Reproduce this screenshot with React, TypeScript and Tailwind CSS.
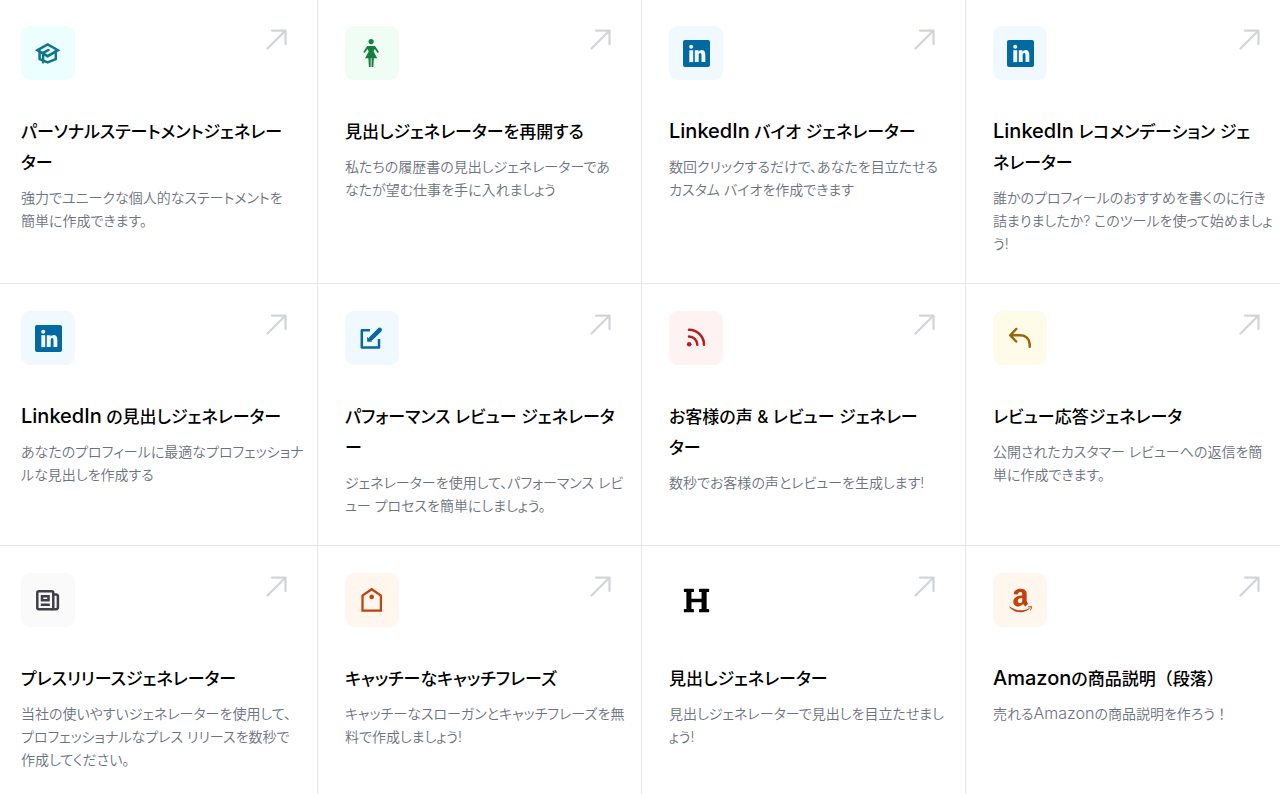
import type { ReactNode } from "react";
import { FaAmazon, FaHeading } from "react-icons/fa";
import { ImWoman } from "react-icons/im";

type Tool = {
  title: string;
  description: string;
  tone: string;
  icon: ReactNode;
};

function StrokeIcon({ children }: { children: ReactNode }) {
  return (
    <svg
      className="size-7"
      viewBox="0 0 28 28"
      fill="none"
      stroke="currentColor"
      strokeWidth="2.5"
      strokeLinecap="round"
      strokeLinejoin="round"
      aria-hidden="true"
    >
      {children}
    </svg>
  );
}

function LinkedInIcon() {
  return (
    <svg className="size-[27px]" viewBox="0 0 27 27" aria-hidden="true">
      <rect width="27" height="27" rx="2" fill="currentColor" />
      <g className="fill-sky-50">
        <circle cx="8.200" cy="6.800" r="2" />
        <path d="M6.300 10.200h3.900v11.900H6.300z" />
        <path d="M11.800 10.200h3.700v1.500c.7-1.100 1.800-1.800 3.100-1.800 2.600 0 3.700 1.700 3.700 4.600v7.600h-3.800v-6.900c0-1.400-.4-2.100-1.300-2.100-1 0-1.500.8-1.500 2.200v6.800h-3.900z" />
      </g>
    </svg>
  );
}

const tools: Tool[] = [
  {
    title: "パーソナルステートメントジェネレー\nター",
    description: "強力でユニークな個人的なステートメントを\n簡単に作成できます。",
    tone: "bg-cyan-50 text-[#0e7490]",
    icon: (
      <StrokeIcon>
        <path strokeLinejoin="miter" d="M3.500 11.200 13.700 5.400l10.200 5.800-10.200 6z" />
        <path d="M5.600 12.400v7.800l8.100 3.200 8.100-3.200v-7.800" />
        <path d="m14.500 11-5.400 2.900v9.300" />
      </StrokeIcon>
    ),
  },
  {
    title: "見出しジェネレーターを再開する",
    description: "私たちの履歴書の見出しジェネレーターであ\nなたが望む仕事を手に入れましょう",
    tone: "bg-green-50 text-[#15803d]",
    icon: <ImWoman className="size-7" />,
  },
  {
    title: "LinkedIn バイオ ジェネレーター",
    description: "数回クリックするだけで、あなたを目立たせる\nカスタム バイオを作成できます",
    tone: "bg-sky-50 text-[#0369a1]",
    icon: <LinkedInIcon />,
  },
  {
    title: "LinkedIn レコメンデーション ジェ\nネレーター",
    description: "誰かのプロフィールのおすすめを書くのに行き\n詰まりましたか? このツールを使って始めましょ\nう!",
    tone: "bg-sky-50 text-[#0369a1]",
    icon: <LinkedInIcon />,
  },
  {
    title: "LinkedIn の見出しジェネレーター",
    description: "あなたのプロフィールに最適なプロフェッショナ\nルな見出しを作成する",
    tone: "bg-sky-50 text-[#0369a1]",
    icon: <LinkedInIcon />,
  },
  {
    title: "パフォーマンス レビュー ジェネレータ\nー",
    description: "ジェネレーターを使用して、パフォーマンス レビ\nュー プロセスを簡単にしましょう。",
    tone: "bg-sky-50 text-[#0369a1]",
    icon: (
      <StrokeIcon>
        <path strokeLinecap="butt" d="M12 6.200H3.800v17.200h17.200v-8.500" />
        <path strokeWidth="4.500" d="m13 14.500 8.700-8.700" />
        <path fill="currentColor" stroke="none" d="M9.200 12.800v5h5z" />
      </StrokeIcon>
    ),
  },
  {
    title: "お客様の声 & レビュー ジェネレー\nター",
    description: "数秒でお客様の声とレビューを生成します!",
    tone: "bg-red-50 text-[#b91c1c]",
    icon: (
      <StrokeIcon>
        <path d="M7 5.700a15 15 0 0 1 15 15M7 12.500a8.300 8.300 0 0 1 8.300 8.200" />
        <circle cx="7.200" cy="20.300" r="2.300" fill="currentColor" stroke="none" />
      </StrokeIcon>
    ),
  },
  {
    title: "レビュー応答ジェネレータ",
    description: "公開されたカスタマー レビューへの返信を簡\n単に作成できます。",
    tone: "bg-yellow-50 text-[#a16207]",
    icon: (
      <StrokeIcon>
        <path d="M10.200 5 4.200 11.300l6 6.200M4.200 11.300h10.500a9 9 0 0 1 9 9v2.500" />
      </StrokeIcon>
    ),
  },
  {
    title: "プレスリリースジェネレーター",
    description: "当社の使いやすいジェネレーターを使用して、\nプロフェッショナルなプレス リリースを数秒で\n作成してください。",
    tone: "bg-neutral-50 text-zinc-700",
    icon: (
      <StrokeIcon>
        <rect x="3.300" y="5.200" width="16" height="18" rx="1.500" />
        <path d="M19.300 8.500h2.900a1.700 1.700 0 0 1 1.700 1.700v11.300a1.700 1.700 0 0 1-1.700 1.700h-4" />
        <path strokeLinecap="butt" strokeLinejoin="miter" d="M8 10.200h6.500v4H8zM6.800 18.700h9" />
      </StrokeIcon>
    ),
  },
  {
    title: "キャッチーなキャッチフレーズ",
    description: "キャッチーなスローガンとキャッチフレーズを無\n料で作成しましょう!",
    tone: "bg-orange-50 text-[#c2410c]",
    icon: (
      <StrokeIcon>
        <path strokeWidth="2.250" strokeLinejoin="miter" d="M4.500 24.700V9.500l9.200-6.300 9.200 6.300v15.200z" />
        <circle cx="13.700" cy="10.900" r="2.300" fill="currentColor" stroke="none" />
      </StrokeIcon>
    ),
  },
  {
    title: "見出しジェネレーター",
    description: "見出しジェネレーターで見出しを目立たせまし\nょう!",
    tone: "text-black",
    icon: <FaHeading className="size-[27px]" />,
  },
  {
    title: "Amazonの商品説明（段落）",
    description: "売れるAmazonの商品説明を作ろう！",
    tone: "bg-orange-50 text-[#c2410c]",
    icon: <FaAmazon className="size-[27px]" />,
  },
];

// Latin words run larger than the kana, full-width marks keep their full em.
function MixedLines({ text, latinClass }: { text: string; latinClass: string }) {
  return text.split("\n").map((line) => (
    <span key={line} className="block">
      {line.split(/([A-Za-z]+|[（）！])/).map((part, i) => {
        if (i % 2 === 0) return part;
        return (
          <span key={i} className={/[A-Za-z]/.test(part) ? latinClass : "[font-feature-settings:normal]"}>
            {part}
          </span>
        );
      })}
    </span>
  ));
}

function ToolCard({ tool }: { tool: Tool }) {
  return (
    <a
      href="#"
      className="block min-w-0 border-r border-b border-[#e5e7eb] px-[27px] pt-[27px] pb-7 nth-[-n+4]:pt-[26px] nth-[4n+1]:pl-[21px] nth-[4n]:border-r-0 nth-[4n]:pr-[17px]"
    >
      <div className="flex items-start justify-between">
        <span className={`flex size-[54px] items-center justify-center rounded-[9px] ${tool.tone}`}>
          {tool.icon}
        </span>
        <svg className="size-[27px] text-[#d1d5db]" viewBox="0 0 24 24" fill="currentColor" aria-hidden="true">
          <path d="M20 4h1a1 1 0 0 0-1-1v1zm-1 12a1 1 0 1 0 2 0h-2zM8 3a1 1 0 0 0 0 2V3zM3.293 19.293a1 1 0 1 0 1.414 1.414l-1.414-1.414zM19 4v12h2V4h-2zm1-1H8v2h12V3zm-.707.293l-16 16 1.414 1.414 16-16-1.414-1.414z" />
        </svg>
      </div>
      <h3 className="mt-[37px] text-[17px] leading-[31px] font-medium whitespace-pre text-black">
        <MixedLines text={tool.title} latinClass="text-xl leading-none" />
      </h3>
      <p className="mt-[7px] text-sm leading-[23px] font-[350] whitespace-pre text-[#6b7280]">
        <MixedLines text={tool.description} latinClass="text-base leading-none" />
      </p>
    </a>
  );
}

export default function App() {
  return (
    <main
      lang="ja"
      className="grid grid-cols-[318fr_324fr_324fr_314fr] overflow-hidden bg-white font-['Inter','Noto_Sans_CJK_JP',sans-serif] [font-feature-settings:'palt']"
    >
      {tools.map((tool) => (
        <ToolCard key={tool.title} tool={tool} />
      ))}
    </main>
  );
}
